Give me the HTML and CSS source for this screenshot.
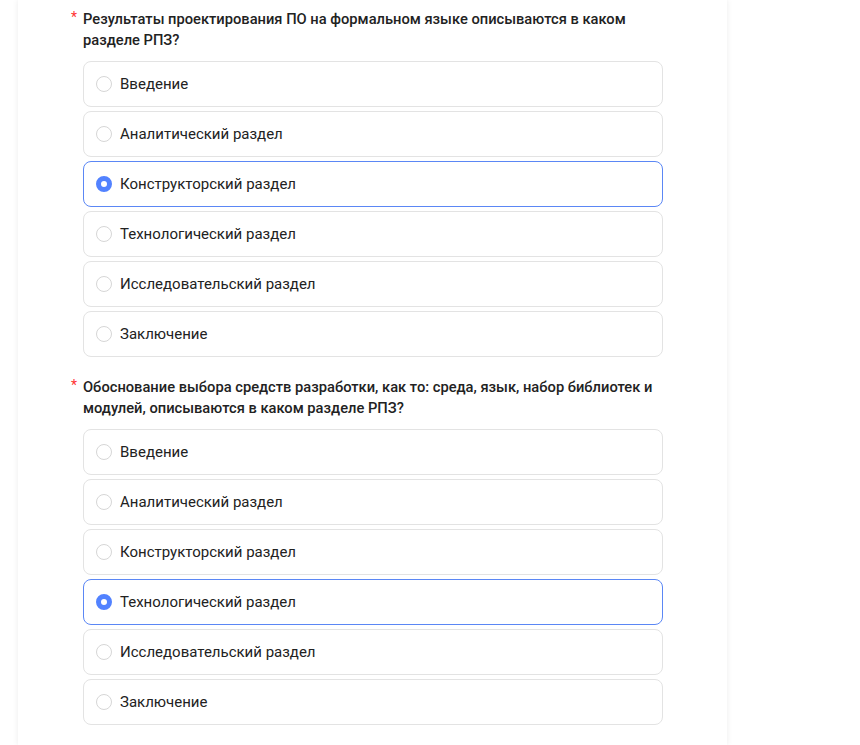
FILE: index.html
```html
<!DOCTYPE html>
<html lang="ru">
<head>
<meta charset="utf-8">
<link rel="stylesheet" href="styles.css">
</head>
<body>
<div class="card">
  <section class="question">
    <div class="title"><span class="req">*</span><span>Результаты проектирования ПО на формальном языке описываются в каком разделе РПЗ?</span></div>
    <div class="options">
      <label class="option"><span class="radio"></span>Введение</label>
      <label class="option"><span class="radio"></span>Аналитический раздел</label>
      <label class="option checked"><span class="radio"></span>Конструкторский раздел</label>
      <label class="option"><span class="radio"></span>Технологический раздел</label>
      <label class="option"><span class="radio"></span>Исследовательский раздел</label>
      <label class="option"><span class="radio"></span>Заключение</label>
    </div>
  </section>
  <section class="question">
    <div class="title"><span class="req">*</span><span>Обоснование выбора средств разработки, как то: среда, язык, набор библиотек и модулей, описываются в каком разделе РПЗ?</span></div>
    <div class="options">
      <label class="option"><span class="radio"></span>Введение</label>
      <label class="option"><span class="radio"></span>Аналитический раздел</label>
      <label class="option"><span class="radio"></span>Конструкторский раздел</label>
      <label class="option checked"><span class="radio"></span>Технологический раздел</label>
      <label class="option"><span class="radio"></span>Исследовательский раздел</label>
      <label class="option"><span class="radio"></span>Заключение</label>
    </div>
  </section>
</div>
</body>
</html>
```

FILE: styles.css
```css
html, body {
  margin: 0;
  padding: 0;
  background: #fff;
  height: 100%;
  overflow: hidden;
}
body {
  font-family: Roboto, "Noto Sans", sans-serif;
  color: #222;
}
.card {
  margin-left: 18px;
  width: 709px;
  min-height: 745px;
  box-sizing: border-box;
  background: #fff;
  box-shadow: 0 0 6px rgba(0, 0, 0, 0.08);
  padding: 8px 0 0 65px;
  display: flex;
  flex-direction: column;
  gap: 19px;
}
.question {
  display: flex;
  flex-direction: column;
  gap: 11px;
}
.title {
  position: relative;
  width: 582px;
  font-size: 14.7px;
  line-height: 21px;
  font-weight: 500;
  color: #222;
  padding-top: 1px;
}
.req {
  position: absolute;
  left: -12px;
  top: -1px;
  color: #f33;
  font-size: 14px;
  font-weight: 400;
}
.options {
  display: flex;
  flex-direction: column;
  gap: 4px;
  margin-top: -1px;
}
.option {
  width: 580px;
  height: 46px;
  box-sizing: border-box;
  border: 1px solid #e3e3e3;
  border-radius: 8px;
  display: flex;
  align-items: center;
  gap: 8px;
  padding-left: 12px;
  padding-bottom: 1px;
  font-size: 15px;
  color: #222;
}
.option.checked {
  border-color: #5b87f5;
}
.radio {
  width: 16px;
  height: 16px;
  box-sizing: border-box;
  border: 1px solid #d6d6d6;
  border-radius: 50%;
  background: #fff;
  flex: none;
}
.checked .radio {
  border: 5.5px solid #5282ff;
  background: #fff;
}
```
